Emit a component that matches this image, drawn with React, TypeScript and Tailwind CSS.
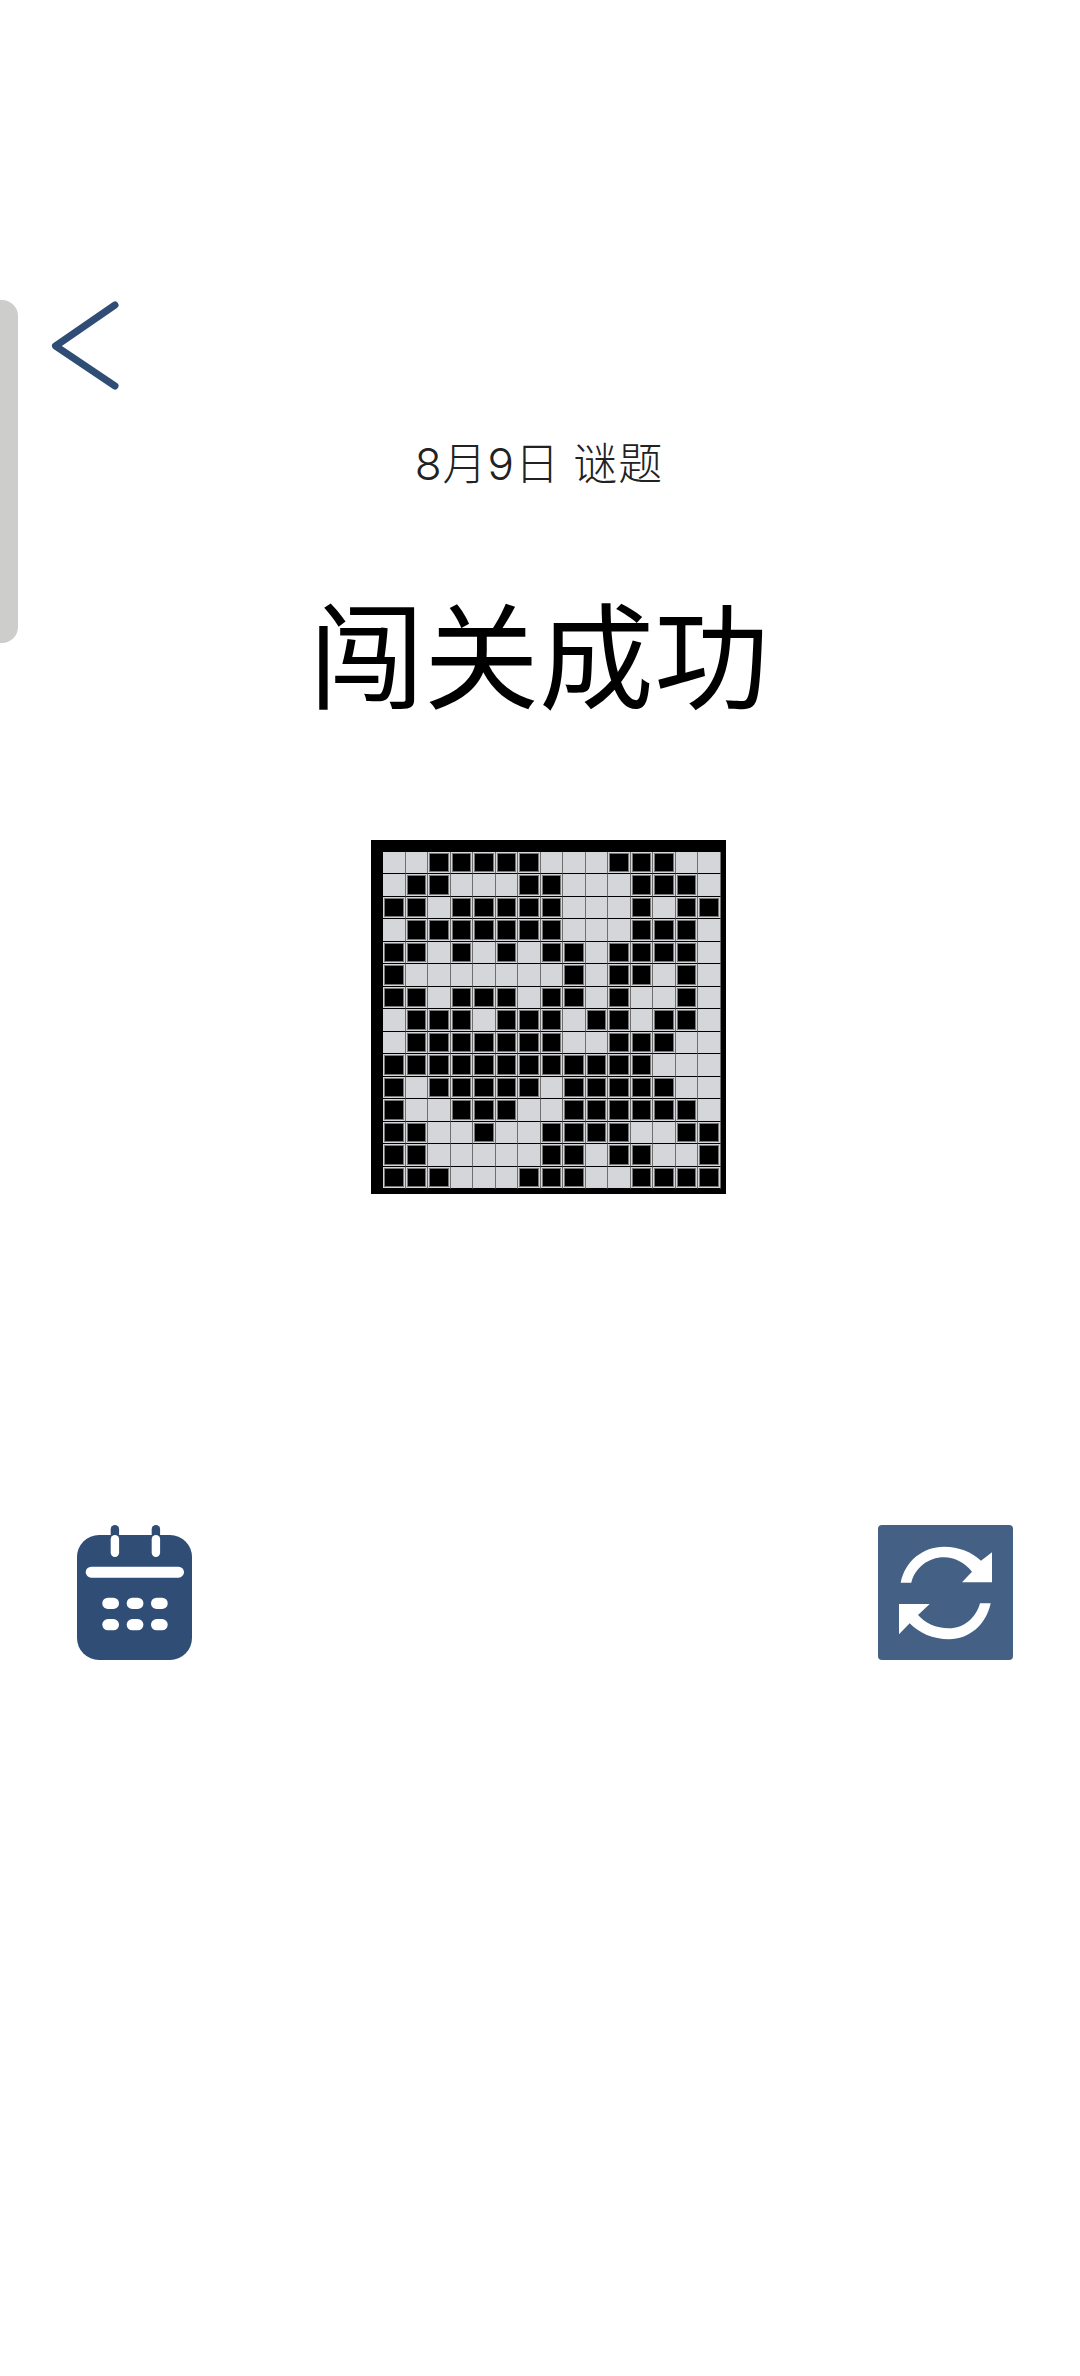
import React from "react";

const rows = [
  "..XXXXX...XXX..",
  ".XX...XX...XXX.",
  "XX.XXXXX...X.XX",
  ".XXXXXXX...XXX.",
  "XX.X.X.XX.XXXX.",
  "X.......X.XX.X.",
  "XX.XXX.XX.X..X.",
  ".XXX.XXX.XX.XX.",
  ".XXXXXXX..XXX..",
  "XXXXXXXXXXXX...",
  "X.XXXXX.XXXXX..",
  "X..XXX..XXXXXX.",
  "XX..X..XXXX..XX",
  "XX.....XX.XX..X",
  "XXX...XXX..XXXX",
];

function Board() {
  return (
    <div className="w-[355px] h-[354px] ml-[371px] bg-black pl-[12px] pt-[12px] pr-[5px] pb-[5px]">
      <div className="grid grid-cols-[repeat(15,1fr)] grid-rows-[repeat(15,1fr)] w-full h-full">
        {rows.flatMap((row, y) =>
          row.split("").map((c, x) => (
            <div
              key={`${x}-${y}`}
              className="bg-[#d5d6da] border-r border-b border-r-[#6f6f6f] border-b-black flex p-[1px]"
            >
              {c === "X" && <div className="flex-1 bg-black border border-[#777777]" />}
            </div>
          ))
        )}
      </div>
    </div>
  );
}

function CalendarIcon() {
  return (
    <svg width="115" height="135" viewBox="0 0 115 135">
      <rect x="0" y="10" width="115" height="125" rx="22" fill="#2f4d75" />
      <rect x="33.7" y="0" width="8.4" height="20" rx="4.2" fill="#2f4d75" />
      <rect x="74.7" y="0" width="8.4" height="20" rx="4.2" fill="#2f4d75" />
      <rect x="33.7" y="10" width="8.4" height="22" rx="4.2" fill="#fff" />
      <rect x="74.7" y="10" width="8.4" height="22" rx="4.2" fill="#fff" />
      <rect x="8.7" y="41.7" width="98.3" height="11" rx="5.5" fill="#fff" />
      <rect x="25.3" y="72.7" width="16.7" height="11.3" rx="5.6" fill="#fff" />
      <rect x="49.7" y="72.7" width="16.7" height="11.3" rx="5.6" fill="#fff" />
      <rect x="74" y="72.7" width="16.7" height="11.3" rx="5.6" fill="#fff" />
      <rect x="25.3" y="94" width="16.7" height="11.3" rx="5.6" fill="#fff" />
      <rect x="49.7" y="94" width="16.7" height="11.3" rx="5.6" fill="#fff" />
      <rect x="74" y="94" width="16.7" height="11.3" rx="5.6" fill="#fff" />
    </svg>
  );
}

function RefreshIcon() {
  return (
    <svg width="135" height="135" viewBox="0 0 135 135">
      <rect width="135" height="135" rx="4" fill="#446084" />
      <path
        d="M22.7 57.7C27 36 45 21.7 66 21.7C81 21.7 94 27 103 35.7L114 27.3V57.3H84L94 46.7C87 38 77 32.3 66 32.3C50 32.3 37 43 33.3 57.7Z"
        fill="#fff"
      />
      <path
        d="M112.7 78.3C108 100 91 114.3 71 114.3C55 114.3 41 108 31.7 98.3L21 109.3V79H51.7L40 90C47 98 58 103.3 71 103.3C86 103.3 98 93 102 78.3Z"
        fill="#fff"
      />
    </svg>
  );
}

export default function App() {
  return (
    <div className="relative w-[1080px] h-[2376px] bg-white overflow-hidden font-['Noto_Sans_CJK_SC','Noto_Sans',sans-serif]">
      {/* side handle */}
      <div className="absolute left-0 top-[300px] w-[18px] h-[343px] rounded-r-[16px] bg-[#cdcdcb]" />

      <div className="flex flex-col pt-[300px]">
        <button className="ml-[50px] w-[70px] h-[92px]">
          <svg width="70" height="92" viewBox="0 0 70 92">
            <path
              d="M65 5L5.5 46L65 86"
              fill="none"
              stroke="#2f4d75"
              strokeWidth="7"
              strokeLinecap="round"
              strokeLinejoin="round"
            />
          </svg>
        </button>

        <p className="mt-[40px] ml-[-2px] text-center text-[44px] leading-[64px] text-[#222222] tracking-[1px] font-['Inter','Noto_Sans_CJK_SC',sans-serif] font-light">
          8月9日 谜题
        </p>

        <h1 className="mt-[74px] ml-[-2px] text-center text-[115px] leading-[160px] font-normal text-black">
          闯关成功
        </h1>

        <div className="mt-[110px]">
          <Board />
        </div>

        <div className="mt-[331px] flex justify-between pl-[77px] pr-[67px]">
          <button>
            <CalendarIcon />
          </button>
          <button>
            <RefreshIcon />
          </button>
        </div>
      </div>
    </div>
  );
}
